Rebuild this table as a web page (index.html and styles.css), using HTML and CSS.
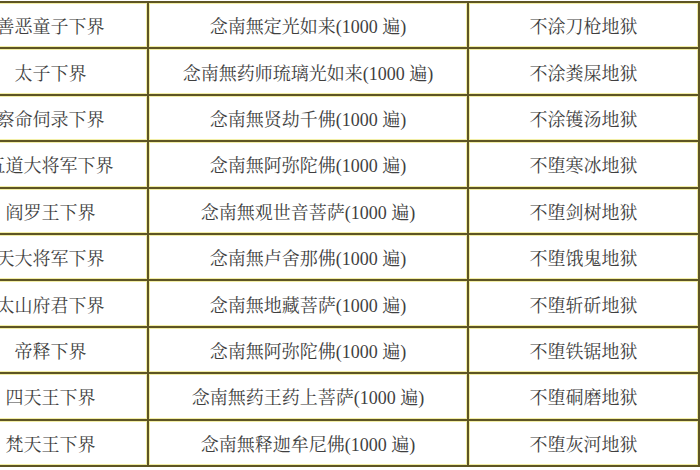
FILE: index.html
```html
<!DOCTYPE html>
<html lang="zh-CN">
<head>
<meta charset="utf-8">
<title>下界表</title>
<link rel="stylesheet" href="styles.css">
</head>
<body>
<table class="merit">
  <colgroup>
    <col class="c1"><col class="c2"><col class="c3">
  </colgroup>
  <tbody>
    <tr><td>善恶童子下界</td><td>念南無定光如来(1000 遍)</td><td>不涂刀枪地狱</td></tr>
    <tr><td>太子下界</td><td>念南無药师琉璃光如来(1000 遍)</td><td>不涂粪屎地狱</td></tr>
    <tr><td>察命伺录下界</td><td>念南無贤劫千佛(1000 遍)</td><td>不涂镬汤地狱</td></tr>
    <tr><td>五道大将军下界</td><td>念南無阿弥陀佛(1000 遍)</td><td>不堕寒冰地狱</td></tr>
    <tr><td>阎罗王下界</td><td>念南無观世音菩萨(1000 遍)</td><td>不堕剑树地狱</td></tr>
    <tr><td>天大将军下界</td><td>念南無卢舍那佛(1000 遍)</td><td>不堕饿鬼地狱</td></tr>
    <tr><td>太山府君下界</td><td>念南無地藏菩萨(1000 遍)</td><td>不堕斩斫地狱</td></tr>
    <tr><td>帝释下界</td><td>念南無阿弥陀佛(1000 遍)</td><td>不堕铁锯地狱</td></tr>
    <tr><td>四天王下界</td><td>念南無药王药上菩萨(1000 遍)</td><td>不堕硐磨地狱</td></tr>
    <tr><td>梵天王下界</td><td>念南無释迦牟尼佛(1000 遍)</td><td>不堕灰河地狱</td></tr>
  </tbody>
</table>
</body>
</html>
```
FILE: styles.css
```css
html, body {
  margin: 0;
  padding: 0;
  background: #ffffff;
  overflow: hidden;
}

.merit {
  margin: 1px 0 0 -48px;
  border-collapse: separate;
  border-spacing: 0;
  table-layout: fixed;
  width: 746px;
  border-top: 2px solid #5e5524;
  border-left: 2px solid #5e5524;
  font-family: "Liberation Serif", "Noto Serif CJK SC", "Noto Sans CJK SC", serif;
  font-size: 18px;
  color: #3f3f3f;
}

.c1 { width: 195px; }
.c2 { width: 320px; }
.c3 { width: 231px; }

.merit td {
  height: 44.4px;
  padding: 0;
  text-align: center;
  vertical-align: middle;
  white-space: nowrap;
  border-right: 2px solid #5e5524;
  border-bottom: 2px solid #5e5524;
  box-shadow: inset 0 0 0 1px #f2eea6;
  background: #ffffff;
}
```
